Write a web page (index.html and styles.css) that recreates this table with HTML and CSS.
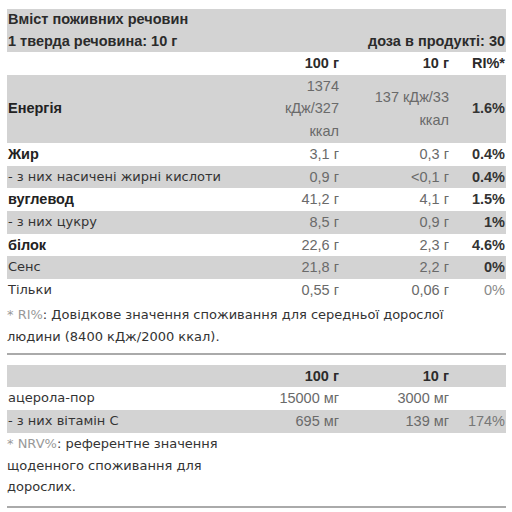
FILE: index.html
```html
<!DOCTYPE html>
<html lang="uk">
<head>
    <meta charset="UTF-8">
    <meta name="viewport" content="width=device-width, initial-scale=1.0">
    <title>Вміст поживних речовин</title>
    <link rel="stylesheet" href="styles.css">
</head>
<body>
    <div class="page">
        <table class="nutri">
            <colgroup>
                <col class="c-name">
                <col class="c-100">
                <col class="c-dose">
                <col class="c-ri">
            </colgroup>
            <tr class="shade head">
                <th colspan="4">Вміст поживних речовин</th>
            </tr>
            <tr class="shade head">
                <th>1 тверда речовина: 10 г</th>
                <th colspan="3" class="num clip">доза в продукті: 30</th>
            </tr>
            <tr class="cols">
                <th></th>
                <th class="num">100 г</th>
                <th class="num dose">10 г</th>
                <th class="num">RI%*</th>
            </tr>
            <tr class="shade strong">
                <td>Енергія</td>
                <td class="num">1374 кДж/327 ккал</td>
                <td class="num dose">137 кДж/33 ккал</td>
                <td class="num ri">1.6%</td>
            </tr>
            <tr class="strong">
                <td>Жир</td>
                <td class="num">3,1 г</td>
                <td class="num dose">0,3 г</td>
                <td class="num ri">0.4%</td>
            </tr>
            <tr class="shade">
                <td>- з них насичені жирні кислоти</td>
                <td class="num">0,9 г</td>
                <td class="num dose">&lt;0,1 г</td>
                <td class="num ri bold">0.4%</td>
            </tr>
            <tr class="strong">
                <td>вуглевод</td>
                <td class="num">41,2 г</td>
                <td class="num dose">4,1 г</td>
                <td class="num ri">1.5%</td>
            </tr>
            <tr class="shade">
                <td>- з них цукру</td>
                <td class="num">8,5 г</td>
                <td class="num dose">0,9 г</td>
                <td class="num ri bold">1%</td>
            </tr>
            <tr class="strong">
                <td>білок</td>
                <td class="num">22,6 г</td>
                <td class="num dose">2,3 г</td>
                <td class="num ri">4.6%</td>
            </tr>
            <tr class="shade">
                <td>Сенс</td>
                <td class="num">21,8 г</td>
                <td class="num dose">2,2 г</td>
                <td class="num ri bold">0%</td>
            </tr>
            <tr>
                <td>Тільки</td>
                <td class="num">0,55 г</td>
                <td class="num dose">0,06 г</td>
                <td class="num ri">0%</td>
            </tr>
        </table>

        <p class="note wide"><span class="mark">* RI%</span>: Довідкове значення споживання для середньої дорослої людини (8400 кДж/2000 ккал).</p>

        <hr class="rule">

        <table class="nutri second">
            <colgroup>
                <col class="c-name">
                <col class="c-100">
                <col class="c-dose">
                <col class="c-ri">
            </colgroup>
            <tr class="shade cols">
                <th></th>
                <th class="num">100 г</th>
                <th class="num dose">10 г</th>
                <th></th>
            </tr>
            <tr>
                <td>ацерола-пор</td>
                <td class="num">15000 мг</td>
                <td class="num dose">3000 мг</td>
                <td></td>
            </tr>
            <tr class="shade">
                <td>- з них вітамін С</td>
                <td class="num">695 мг</td>
                <td class="num dose">139 мг</td>
                <td class="num ri">174%</td>
            </tr>
        </table>

        <p class="note narrow"><span class="mark">* NRV%</span>: референтне значення щоденного споживання для дорослих.</p>

        <hr class="rule last">
    </div>
</body>
</html>
```

FILE: styles.css
```css
body {
    margin: 0;
    background-color: white;
    font-family: "DejaVu Sans", Verdana, sans-serif;
    font-size: 13px;
    color: #333;
}

.page {
    padding: 9px 6px 0 7px;
}

.nutri {
    width: 100%;
    table-layout: fixed;
    border-collapse: collapse;
}

.c-name { width: 261px; }
.c-100 { width: 72px; }
.c-dose { width: 110px; }
.c-ri { width: 56px; }

th, td {
    padding: 0 1px;
    line-height: 22.7px;
    text-align: left;
    vertical-align: middle;
    font-weight: normal;
}

th {
    font-family: "Liberation Sans", Arial, sans-serif;
    font-size: 14.5px;
    font-weight: bold;
    color: #2b2b2b;
}

.head th {
    line-height: 21.5px;
}

.shade {
    background-color: #d3d3d3;
}

.num {
    text-align: right;
    font-family: "Liberation Sans", Arial, sans-serif;
    font-size: 14.5px;
    color: #6a6a6a;
}

th.num {
    color: #2b2b2b;
}

.dose {
    padding-left: 14px;
}

.clip {
    white-space: nowrap;
    overflow: hidden;
}

.strong td:first-child {
    font-family: "Liberation Sans", Arial, sans-serif;
    font-size: 14.5px;
    font-weight: bold;
    color: #222;
}

.ri {
    color: #8a8a8a;
}

.strong .ri,
.ri.bold {
    font-weight: bold;
    color: #333;
}

.second .ri {
    color: #777;
}

.note {
    margin: 0;
    padding-top: 2px;
    line-height: 22px;
    color: #333;
}

.note.wide {
    width: 460px;
}

.note.narrow {
    width: 250px;
    padding-top: 0;
    line-height: 21.7px;
}

.mark {
    color: #999;
}

.rule {
    margin: 5px 0 10px;
    border: none;
    border-top: 2px solid #aaa;
}

.rule.last {
    margin-top: 8px;
}
```
